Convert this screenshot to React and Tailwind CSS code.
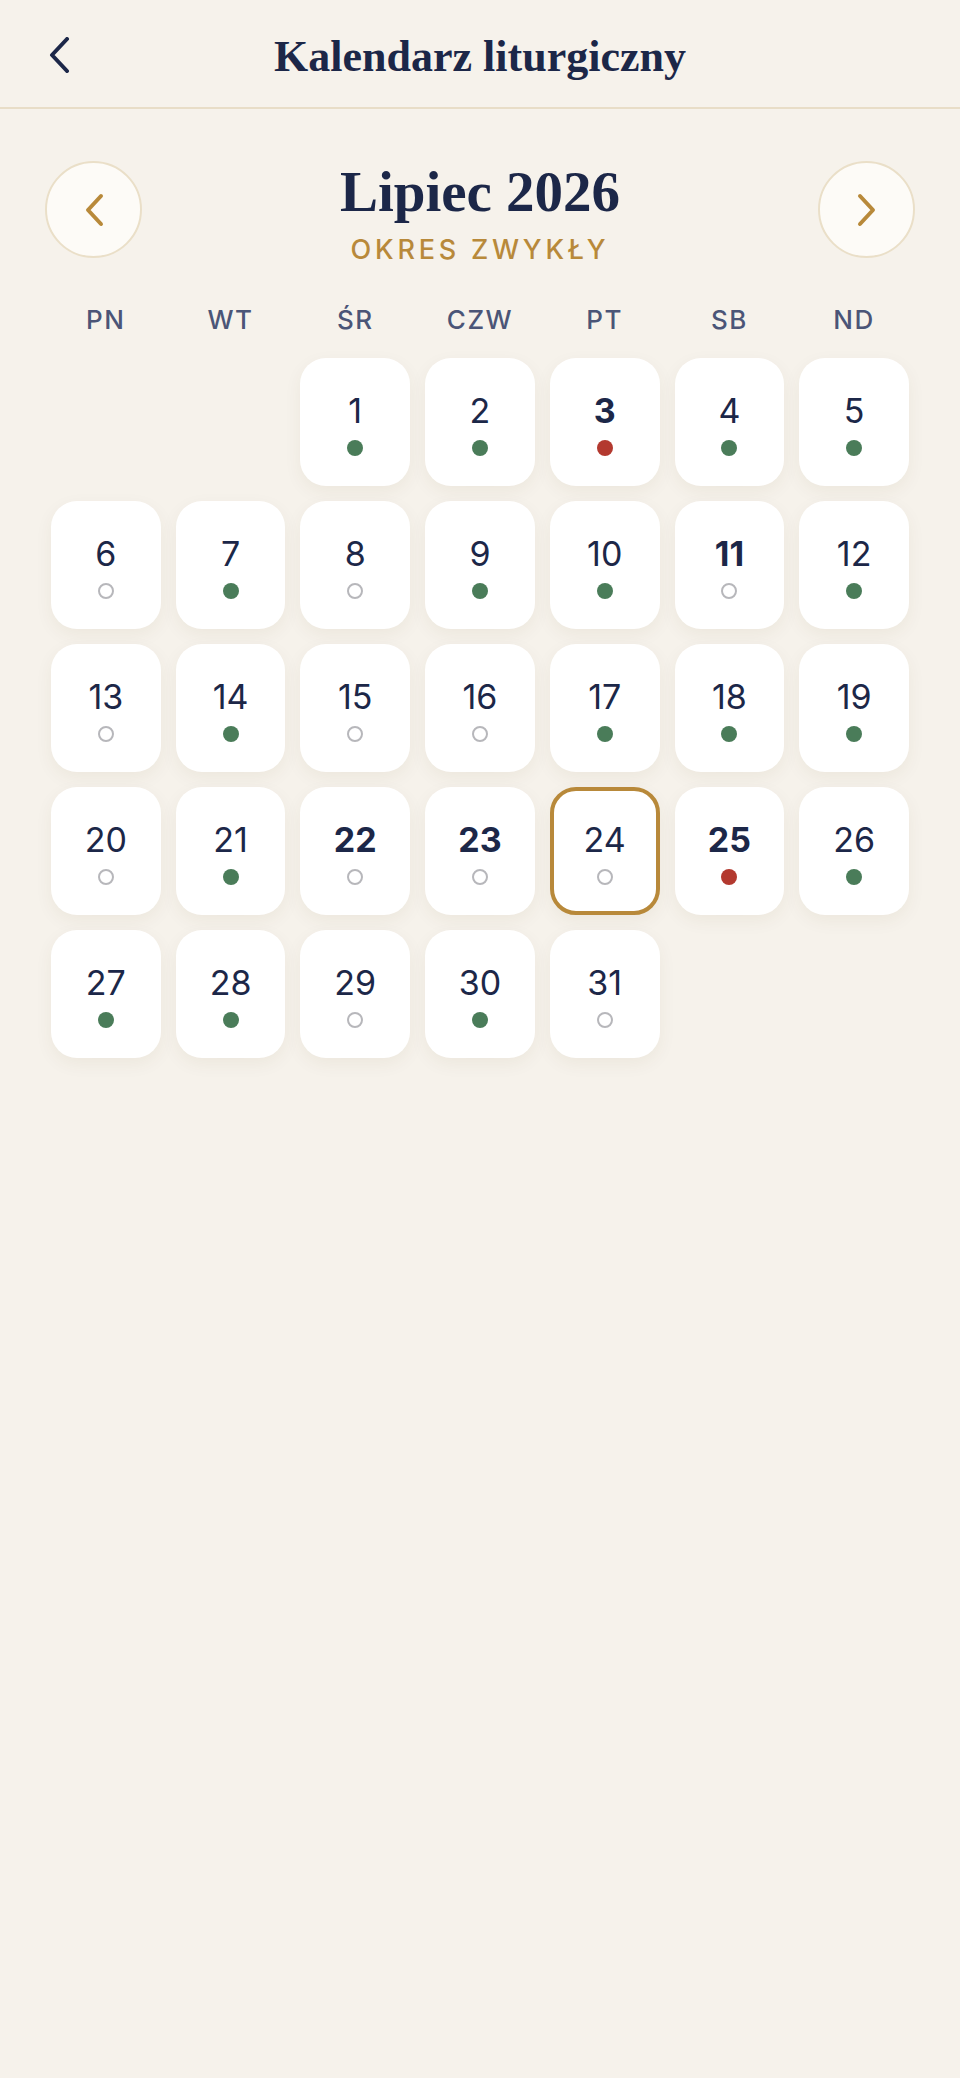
import React from 'react'

const WEEKDAYS = ['PN', 'WT', 'ŚR', 'CZW', 'PT', 'SB', 'ND']

// g = zielony, r = czerwony, e = brak
const DOTS = {
  1: 'g', 2: 'g', 3: 'r', 4: 'g', 5: 'g',
  6: 'e', 7: 'g', 8: 'e', 9: 'g', 10: 'g', 11: 'e', 12: 'g',
  13: 'e', 14: 'g', 15: 'e', 16: 'e', 17: 'g', 18: 'g', 19: 'g',
  20: 'e', 21: 'g', 22: 'e', 23: 'e', 24: 'e', 25: 'r', 26: 'g',
  27: 'g', 28: 'g', 29: 'e', 30: 'g', 31: 'e',
}
const BOLD = [3, 11, 22, 23, 25]
const SELECTED = 24
const OFFSET = 2

function Dot({ kind }) {
  if (kind === 'g') return <span className="block w-[16px] h-[16px] rounded-full bg-[#4a7c59]" />
  if (kind === 'r') return <span className="block w-[16px] h-[16px] rounded-full bg-[#b3392f]" />
  return <span className="block w-[16px] h-[16px] rounded-full border-2 border-[#b7b7bb] bg-white" />
}

function DayCell({ day }) {
  const selected = day === SELECTED
  const bold = BOLD.includes(day)
  return (
    <div
      className={`h-[128px] rounded-[26px] bg-white flex flex-col items-center justify-center gap-[12px] pt-[6px] shadow-[0_6px_18px_rgba(80,60,20,0.06)] ${
        selected ? 'border-[4px] border-[#b8893a]' : ''
      }`}
    >
      <span
        className={`text-[34px] leading-none text-[#1c2748] ${bold ? 'font-bold' : 'font-normal'}`}
      >
        {day}
      </span>
      <Dot kind={DOTS[day]} />
    </div>
  )
}

function NavButton({ dir }) {
  return (
    <button className="w-[97px] h-[97px] rounded-full border-2 border-[#eadfc8] bg-[#fdfbf7] flex items-center justify-center">
      <svg width="22" height="34" viewBox="0 0 22 34" fill="none">
        {dir === 'left' ? (
          <polyline points="18,3 5,17 18,31" stroke="#b8893a" strokeWidth="4" strokeLinecap="round" strokeLinejoin="round" />
        ) : (
          <polyline points="4,3 17,17 4,31" stroke="#b8893a" strokeWidth="4" strokeLinecap="round" strokeLinejoin="round" />
        )}
      </svg>
    </button>
  )
}

export default function App() {
  const cells = [...Array(OFFSET).fill(null), ...Array.from({ length: 31 }, (_, i) => i + 1)]

  return (
    <div className="min-h-screen bg-[#f6f2eb] font-['Inter','Noto_Sans',sans-serif]">
      {/* nagłówek */}
      <header className="h-[109px] border-b-2 border-[#e8ddc7] grid grid-cols-[1fr_auto_1fr] items-start">
        <button className="ml-[48px] mt-[37px] w-[22px] h-[36px] flex items-center">
          <svg width="22" height="36" viewBox="0 0 22 36" fill="none">
            <polyline points="19,2 4,18 19,34" stroke="#1c2748" strokeWidth="4" strokeLinecap="round" strokeLinejoin="round" />
          </svg>
        </button>
        <h1 className="mt-[35px] text-[44px] leading-none font-bold text-[#1c2748] font-['Liberation_Serif','DejaVu_Serif',serif]">
          Kalendarz liturgiczny
        </h1>
        <div />
      </header>

      {/* miesiąc */}
      <div className="px-[45px] pt-[52px] flex items-start justify-between">
        <NavButton dir="left" />
        <div className="flex flex-col items-center pt-[2px]">
          <h2 className="text-[57px] leading-none font-bold text-[#1c2748] font-['Liberation_Serif','DejaVu_Serif',serif]">
            Lipiec 2026
          </h2>
          <p className="mt-[16px] text-[27px] leading-none font-medium tracking-[0.14em] text-[#b8893a]">
            OKRES ZWYKŁY
          </p>
        </div>
        <NavButton dir="right" />
      </div>

      {/* dni tygodnia */}
      <div className="px-[51px] mt-[44px] grid grid-cols-7 gap-x-[15px]">
        {WEEKDAYS.map(d => (
          <div key={d} className="text-center text-[26px] leading-none font-medium tracking-[0.06em] text-[#4b5577]">
            {d}
          </div>
        ))}
      </div>

      {/* siatka dni */}
      <div className="px-[51px] mt-[25px] grid grid-cols-7 gap-[15px]">
        {cells.map((day, i) => (day ? <DayCell key={i} day={day} /> : <div key={i} />))}
      </div>
    </div>
  )
}
